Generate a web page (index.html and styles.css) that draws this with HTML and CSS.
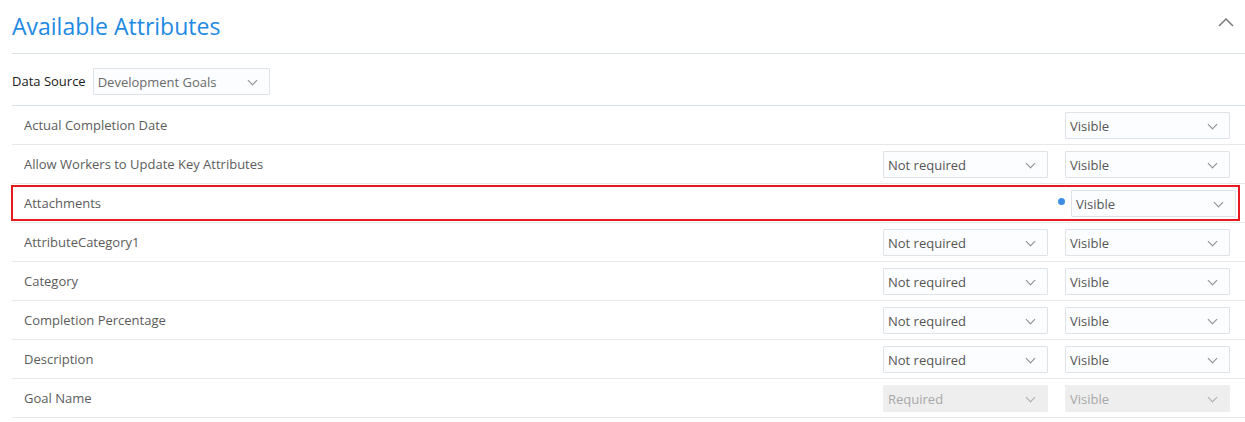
FILE: index.html
```html
<!DOCTYPE html>
<html lang="en">

<head>
  <meta charset="UTF-8">
  <title>Available Attributes</title>
  <link rel="stylesheet" href="styles.css">
</head>

<body>
  <div class="panel">
    <div class="panel-header">
      <h1>Available Attributes</h1>
      <button class="collapse" aria-label="Collapse">
        <svg width="16" height="10" viewBox="0 0 16 10"><path d="M1 9 L8 2 L15 9" fill="none" stroke="#7a7a7a" stroke-width="1.5"/></svg>
      </button>
    </div>

    <div class="source-row">
      <label>Data Source</label>
      <div class="select source-select">Development Goals<span class="chev"></span></div>
    </div>

    <div class="attr-list">
      <div class="attr-row">
        <span class="attr-name">Actual Completion Date</span>
        <div class="controls">
          <div class="select">Visible<span class="chev"></span></div>
        </div>
      </div>
      <div class="attr-row">
        <span class="attr-name">Allow Workers to Update Key Attributes</span>
        <div class="controls">
          <div class="select">Not required<span class="chev"></span></div>
          <div class="select">Visible<span class="chev"></span></div>
        </div>
      </div>
      <div class="attr-row selected">
        <div class="selected-box">
          <span class="attr-name">Attachments</span>
          <div class="controls">
            <span class="dot"></span>
            <div class="select">Visible<span class="chev"></span></div>
          </div>
        </div>
      </div>
      <div class="attr-row">
        <span class="attr-name">AttributeCategory1</span>
        <div class="controls">
          <div class="select">Not required<span class="chev"></span></div>
          <div class="select">Visible<span class="chev"></span></div>
        </div>
      </div>
      <div class="attr-row">
        <span class="attr-name">Category</span>
        <div class="controls">
          <div class="select">Not required<span class="chev"></span></div>
          <div class="select">Visible<span class="chev"></span></div>
        </div>
      </div>
      <div class="attr-row">
        <span class="attr-name">Completion Percentage</span>
        <div class="controls">
          <div class="select">Not required<span class="chev"></span></div>
          <div class="select">Visible<span class="chev"></span></div>
        </div>
      </div>
      <div class="attr-row">
        <span class="attr-name">Description</span>
        <div class="controls">
          <div class="select">Not required<span class="chev"></span></div>
          <div class="select">Visible<span class="chev"></span></div>
        </div>
      </div>
      <div class="attr-row">
        <span class="attr-name">Goal Name</span>
        <div class="controls">
          <div class="select disabled">Required<span class="chev"></span></div>
          <div class="select disabled">Visible<span class="chev"></span></div>
        </div>
      </div>
    </div>
  </div>
</body>

</html>
```

FILE: styles.css
```css
body {
  margin: 0;
  font-family: "Open Sans", "Noto Sans", Arial, sans-serif;
  font-size: 13px;
  color: #5c5c5c;
  background: #fff;
}

.panel {
  padding-left: 12px;
}

.panel-header {
  display: flex;
  align-items: center;
  justify-content: space-between;
  height: 53px;
  border-bottom: 1px solid #dbe1e8;
}

.panel-header h1 {
  margin: 0;
  padding-bottom: 2px;
  font-size: 23px;
  font-weight: normal;
  color: #1e8ae3;
}

.collapse {
  background: none;
  border: none;
  padding: 0;
  margin-right: 10px;
  margin-bottom: 12px;
  width: 18px;
  height: 12px;
}

.source-row {
  display: flex;
  align-items: center;
  gap: 7px;
  height: 48px;
  padding-top: 3px;
  border-bottom: 1px solid #dbe1e8;
}

.source-row label {
  color: #1a1a1a;
}

.select {
  position: relative;
  box-sizing: border-box;
  width: 165px;
  height: 27px;
  line-height: 27px;
  padding-left: 4px;
  border: 1px solid #dfe3e7;
  border-radius: 1px;
  background: #fcfdfe;
  color: #555555;
}

.source-select {
  width: 177px;
  color: #6a6a6a;
}

.select.disabled {
  background: #eeeeee;
  border-color: #eeeeee;
  color: #a8a8a8;
}

.chev {
  position: absolute;
  right: 13px;
  top: 8px;
  width: 6px;
  height: 6px;
  border-right: 1px solid #8a8a8a;
  border-bottom: 1px solid #8a8a8a;
  transform: rotate(45deg);
}

.disabled .chev {
  border-color: #aaaaaa;
}

.attr-row {
  display: flex;
  align-items: center;
  justify-content: space-between;
  height: 38px;
  border-bottom: 1px solid #e6e8ea;
  padding: 0 15px 0 12px;
}

.controls {
  display: flex;
  align-items: center;
  gap: 17px;
}

.attr-row.selected {
  padding: 0;
}

.selected-box {
  display: flex;
  align-items: center;
  justify-content: space-between;
  box-sizing: border-box;
  height: 36px;
  flex: 1;
  margin: 0 5px 0 -1px;
  padding: 0 2px 0 11px;
  border: 2px solid #e8191f;
}

.selected-box .controls {
  gap: 6px;
}

.dot {
  width: 7px;
  height: 7px;
  border-radius: 50%;
  background: #3d8fe4;
  margin-top: -4px;
}
```
